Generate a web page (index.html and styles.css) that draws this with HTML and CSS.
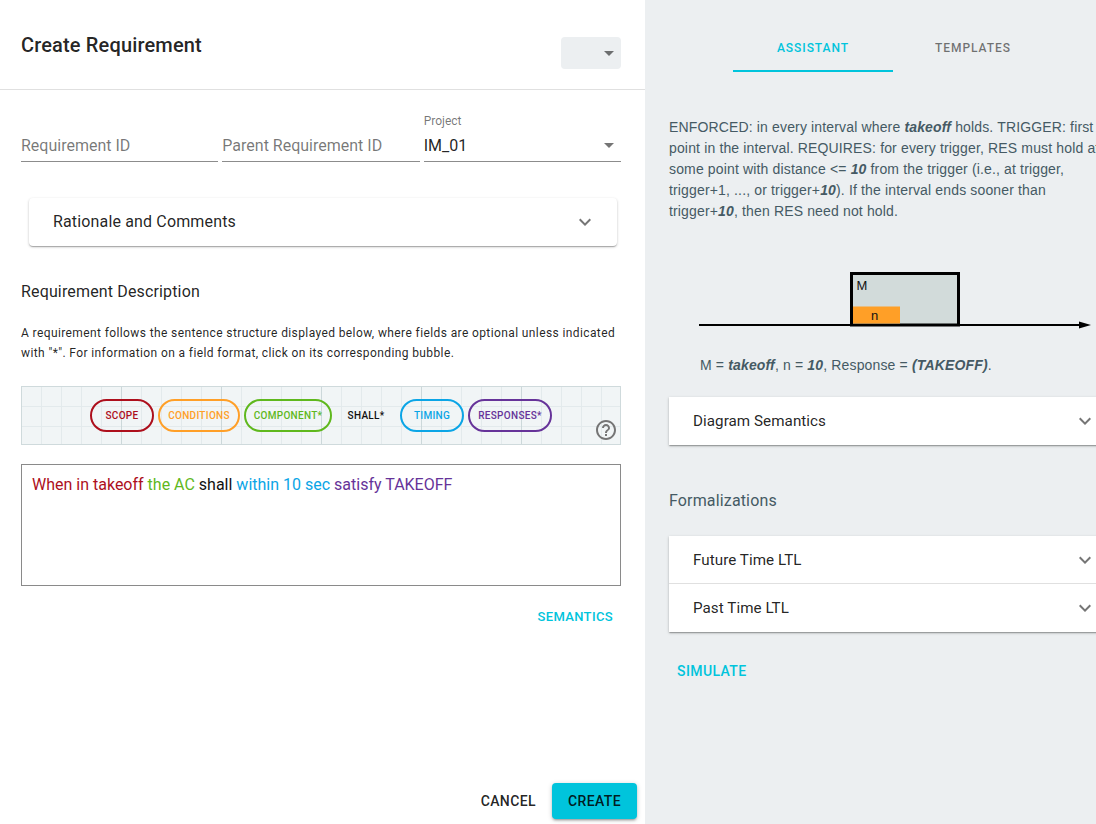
FILE: index.html
```html
<!DOCTYPE html>
<html lang="en">
<head>
<meta charset="utf-8">
<title>Create Requirement</title>
<link rel="stylesheet" href="styles.css">
</head>
<body>
<div class="app">
  <main class="left">
    <header class="head">
      <h1 class="title">Create Requirement</h1>
      <div class="status"><span class="caret"></span></div>
    </header>
    <div class="fields">
      <div class="field"><span class="placeholder">Requirement ID</span></div>
      <div class="field"><span class="placeholder">Parent Requirement ID</span></div>
      <div class="field select"><label class="flabel">Project</label><span class="value">IM_01</span><span class="caret"></span></div>
    </div>
    <div class="acc-wrap">
      <div class="acc-row raised">
        <span class="acc-title">Rationale and Comments</span>
        <svg class="chev" viewBox="0 0 24 24"><path d="M16.59 8.59 12 13.17 7.41 8.59 6 10l6 6 6-6z"/></svg>
      </div>
    </div>
    <h2 class="sub">Requirement Description</h2>
    <p class="help">A requirement follows the sentence structure displayed below, where fields are optional unless indicated with "*". For information on a field format, click on its corresponding bubble.</p>
    <div class="bubbles">
      <span class="bubble c-scope">SCOPE</span>
      <span class="bubble c-cond">CONDITIONS</span>
      <span class="bubble c-comp">COMPONENT*</span>
      <span class="bubble plain">SHALL*</span>
      <span class="bubble c-time">TIMING</span>
      <span class="bubble c-resp">RESPONSES*</span>
      <svg class="help-icon" viewBox="0 0 24 24"><path d="M11 18h2v-2h-2v2zm1-16C6.48 2 2 6.48 2 12s4.48 10 10 10 10-4.48 10-10S17.52 2 12 2zm0 18c-4.41 0-8-3.59-8-8s3.59-8 8-8 8 3.59 8 8-3.59 8-8 8zm0-14c-2.21 0-4 1.79-4 4h2c0-1.1.9-2 2-2s2 .9 2 2c0 2-3 1.75-3 5h2c0-2.25 3-2.5 3-5 0-2.21-1.79-4-4-4z"/></svg>
    </div>
    <div class="editor"><span class="t-scope">When in takeoff</span> <span class="t-comp">the AC</span> <span>shall</span> <span class="t-time">within 10 sec</span> <span class="t-resp">satisfy TAKEOFF</span></div>
    <div class="sem-row"><button class="text-btn small">SEMANTICS</button></div>
    <footer class="actions">
      <button class="text-btn dark">CANCEL</button>
      <button class="primary">CREATE</button>
    </footer>
  </main>
  <aside class="right">
    <nav class="tabs">
      <div class="tab active">ASSISTANT</div>
      <div class="tab">TEMPLATES</div>
    </nav>
    <p class="desc">ENFORCED: in every interval where <b><i>takeoff</i></b> holds. TRIGGER: first point in the interval. REQUIRES: for every trigger, RES must hold at some point with distance &lt;= <b><i>10</i></b> from the trigger (i.e., at trigger, trigger+1, ..., or trigger+<b><i>10</i></b>). If the interval ends sooner than trigger+<b><i>10</i></b>, then RES need not hold.</p>
    <svg class="diagram" viewBox="0 0 440 70" width="440" height="70">
      <rect x="182.5" y="9.5" width="107" height="51.5" fill="#d2dbda" stroke="#000" stroke-width="3"/>
      <rect x="184" y="42.5" width="47" height="17" fill="#ff9f27"/>
      <line x1="30" y1="61" x2="412" y2="61" stroke="#000" stroke-width="2"/>
      <polygon points="410,57.5 422,61 410,64.5" fill="#000"/>
      <text x="187.5" y="26" class="dg-text">M</text>
      <text x="202" y="56" class="dg-text">n</text>
    </svg>
    <p class="caption">M = <b><i>takeoff</i></b>, n = <b><i>10</i></b>, Response = <b><i>(TAKEOFF)</i></b>.</p>
    <div class="acc-row raised wide"><span>Diagram Semantics</span><svg class="chev" viewBox="0 0 24 24"><path d="M16.59 8.59 12 13.17 7.41 8.59 6 10l6 6 6-6z"/></svg></div>
    <h2 class="formal">Formalizations</h2>
    <div class="acc-group raised wide">
      <div class="acc-row"><span>Future Time LTL</span><svg class="chev" viewBox="0 0 24 24"><path d="M16.59 8.59 12 13.17 7.41 8.59 6 10l6 6 6-6z"/></svg></div>
      <div class="acc-row divided"><span>Past Time LTL</span><svg class="chev" viewBox="0 0 24 24"><path d="M16.59 8.59 12 13.17 7.41 8.59 6 10l6 6 6-6z"/></svg></div>
    </div>
    <button class="text-btn sim">SIMULATE</button>
  </aside>
</div>
</body>
</html>
```
FILE: styles.css
```css
* { box-sizing: border-box; }
html, body { margin: 0; height: 824px; overflow: hidden; }
body { font-family: Roboto, sans-serif; color: rgba(0,0,0,.87); background: #fff; }
.app { display: flex; width: 1140px; height: 824px; }
.left { width: 645px; flex: none; background: #fff; display: flex; flex-direction: column; position: relative; }
.right { flex: 1; background: #eceff1; padding: 0 0 0 24px; }

.head { height: 90px; border-bottom: 1px solid #e0e0e0; padding: 0 24px 0 21px; display: flex; justify-content: space-between; }
.title { margin: 32px 0 0; font-size: 20px; line-height: 26px; font-weight: 500; letter-spacing: .15px; }
.status { margin-top: 37px; width: 60px; height: 32px; background: #eceff1; border-radius: 4px; position: relative; }
.caret { position: absolute; right: 7px; top: 14px; width: 0; height: 0; border-left: 5px solid transparent; border-right: 5px solid transparent; border-top: 5px solid rgba(0,0,0,.54); }

.fields { display: flex; gap: 4px; padding: 0 24px 0 21px; margin-top: 23px; }
.field { flex: 1; height: 49px; border-bottom: 1px solid #8c8c8c; position: relative; padding-top: 23px; font-size: 16px; line-height: 19px; }
.placeholder { color: rgba(0,0,0,.54); }
.flabel { position: absolute; left: 0; top: 1px; font-size: 12px; line-height: 14px; color: rgba(0,0,0,.54); }
.select .caret { right: 7px; top: 30px; }

.acc-wrap { padding: 0 28px 0 29px; margin-top: 36px; }
.raised { box-shadow: 0 1px 3px 0 rgba(0,0,0,.2), 0 1px 1px 0 rgba(0,0,0,.14), 0 2px 1px -1px rgba(0,0,0,.12); background: #fff; }
.acc-row { height: 48px; display: flex; align-items: center; justify-content: space-between; padding: 0 20px 0 24px; font-size: 16px; letter-spacing: .15px; background: #fff; border-radius: 4px; }
.acc-title { padding-bottom: 2px; }
.chev { width: 24px; height: 24px; fill: rgba(0,0,0,.54); flex: none; }

.sub { margin: 36px 0 0 21px; font-size: 16px; line-height: 20px; font-weight: 400; letter-spacing: .15px; }
.help { margin: 21px 24px 0 21px; font-size: 12px; line-height: 20px; letter-spacing: .39px; }

.bubbles { margin: 23px 24px 0 21px; height: 59px; display: flex; align-items: flex-start; gap: 4px; padding: 12px 0 0 68px; position: relative; border: 1px solid #cfdadc; background-color: #f1f5f6;
  background-image: linear-gradient(to right, #ccd8da 1px, transparent 1px), linear-gradient(to right, #e3eaec 1px, transparent 1px), linear-gradient(to bottom, #e3eaec 1px, transparent 1px);
  background-size: 100px 100%, 20px 100%, 100% 20px;
  background-position: -1px 0, -1px 0, 0 -1px; }
.bubble { height: 33px; border: 2px solid; border-radius: 16.5px; font-size: 10px; font-weight: 500; line-height: 29px; text-align: center; letter-spacing: .3px; background: transparent; }
.c-scope { width: 64px; color: #ad0f1c; border-color: #ad0f1c; }
.c-cond { width: 82px; color: #ff9f27; border-color: #ff9f27; }
.c-comp { width: 88px; color: #5fb81d; border-color: #5fb81d; }
.plain { width: 60px; border-color: transparent; color: #111; }
.c-time { width: 64px; color: #0ba5e6; border-color: #0ba5e6; }
.c-resp { width: 84px; color: #663399; border-color: #663399; }
.help-icon { position: absolute; right: 2px; bottom: 2px; width: 24px; height: 24px; fill: #757575; }

.editor { margin: 19px 24px 0 21px; height: 122px; border: 1px solid #8a8a8a; padding: 10px 10px; font-size: 16px; line-height: 20px; color: #111; }
.t-scope { color: #ad0f1c; } .t-comp { color: #5fb81d; } .t-time { color: #0ba5e6; } .t-resp { color: #663399; }

.sem-row { display: flex; justify-content: flex-end; padding-right: 32px; margin-top: 23px; }
.text-btn { border: 0; background: none; padding: 0; font-family: inherit; font-weight: 500; letter-spacing: .4px; color: #00c4dc; cursor: pointer; }
.small { font-size: 13px; line-height: 16px; letter-spacing: .35px; }
.actions { position: absolute; right: 8px; bottom: 5px; display: flex; align-items: center; gap: 16px; }
.dark { color: rgba(0,0,0,.87); font-size: 14px; }
.primary { width: 85px; height: 36px; border: 0; border-radius: 4px; background: #00c4dc; color: rgba(0,0,0,.87); font-family: inherit; font-size: 14px; font-weight: 500; letter-spacing: .4px; box-shadow: 0 1px 5px rgba(0,0,0,.2), 0 2px 2px rgba(0,0,0,.14), 0 3px 1px -2px rgba(0,0,0,.12); }

.tabs { display: flex; margin-left: 64px; height: 72px; padding-top: 24px; }
.tab { width: 160px; height: 48px; text-align: center; font-size: 12px; line-height: 48px; font-weight: 500; letter-spacing: .95px; color: rgba(0,0,0,.54); }
.tab.active { color: #00c4dc; border-bottom: 2px solid #00c4dc; }

.desc { margin: 45px 0 0; width: 440px; font-family: "Liberation Sans", Arial, sans-serif; font-size: 14px; letter-spacing: .15px; line-height: 21px; color: #455a64; }
.diagram { display: block; margin-top: 42px; overflow: visible; }
.dg-text { font-family: "Liberation Sans", Arial, sans-serif; font-size: 13px; fill: #111; }
.caption { margin: 21px 0 0 31px; font-family: "Liberation Sans", Arial, sans-serif; font-size: 14px; letter-spacing: .15px; line-height: 20px; color: #455a64; }
.wide { width: 448px; }
.right > .acc-row { margin-top: 22px; border-radius: 0; }
.wide .acc-row, .right > .acc-row { font-size: 15.2px; letter-spacing: .05px; }
.formal { margin: 46px 0 0; font-size: 16px; line-height: 20px; font-weight: 400; letter-spacing: .15px; color: #455a64; }
.acc-group { margin-top: 25px; }
.acc-group .acc-row { border-radius: 0; }
.divided { box-shadow: 0 -1px 0 #e0e0e0; position: relative; }
.sim { display: block; margin: 30px 0 0 8px; font-size: 14px; line-height: 18px; }
```
